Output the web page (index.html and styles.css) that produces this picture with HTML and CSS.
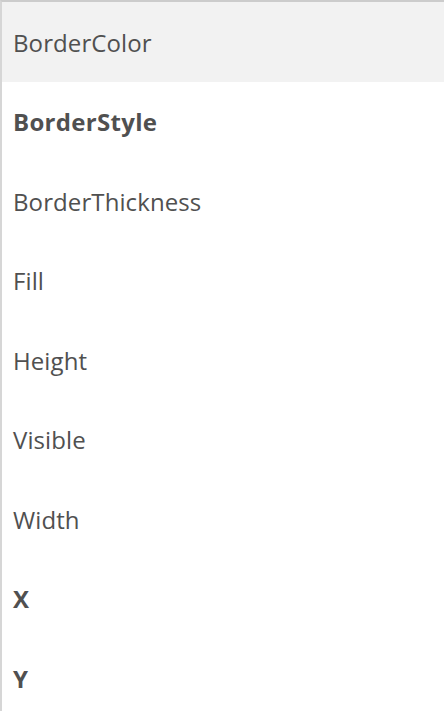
FILE: index.html
```html
<!DOCTYPE html>
<html>
<head>
<meta charset="utf-8">
<link rel="stylesheet" href="styles.css">
</head>
<body>
<ul class="list">
  <li class="item selected">BorderColor</li>
  <li class="item bold">BorderStyle</li>
  <li class="item">BorderThickness</li>
  <li class="item">Fill</li>
  <li class="item">Height</li>
  <li class="item">Visible</li>
  <li class="item">Width</li>
  <li class="item bold">X</li>
  <li class="item bold">Y</li>
</ul>
</body>
</html>
```
FILE: styles.css
```css
html, body {
  margin: 0;
  padding: 0;
  background: #ffffff;
}
body {
  width: 444px;
  height: 711px;
  overflow: hidden;
}
.list {
  list-style: none;
  margin: 0;
  padding: 0;
  border-top: 2px solid #cccccc;
  border-left: 2px solid #d6d6d6;
  box-sizing: border-box;
  height: 711px;
}
.item {
  height: 79.5px;
  display: flex;
  align-items: center;
  padding-left: 11px;
  padding-top: 1px;
  font-family: "Open Sans", "Segoe UI", sans-serif;
  font-size: 24px;
  letter-spacing: 0.1px;
  color: #505050;
  box-sizing: border-box;
}
.item.selected {
  background: #f2f2f2;
}
.item.bold {
  font-weight: 700;
  letter-spacing: 0.3px;
}
```
